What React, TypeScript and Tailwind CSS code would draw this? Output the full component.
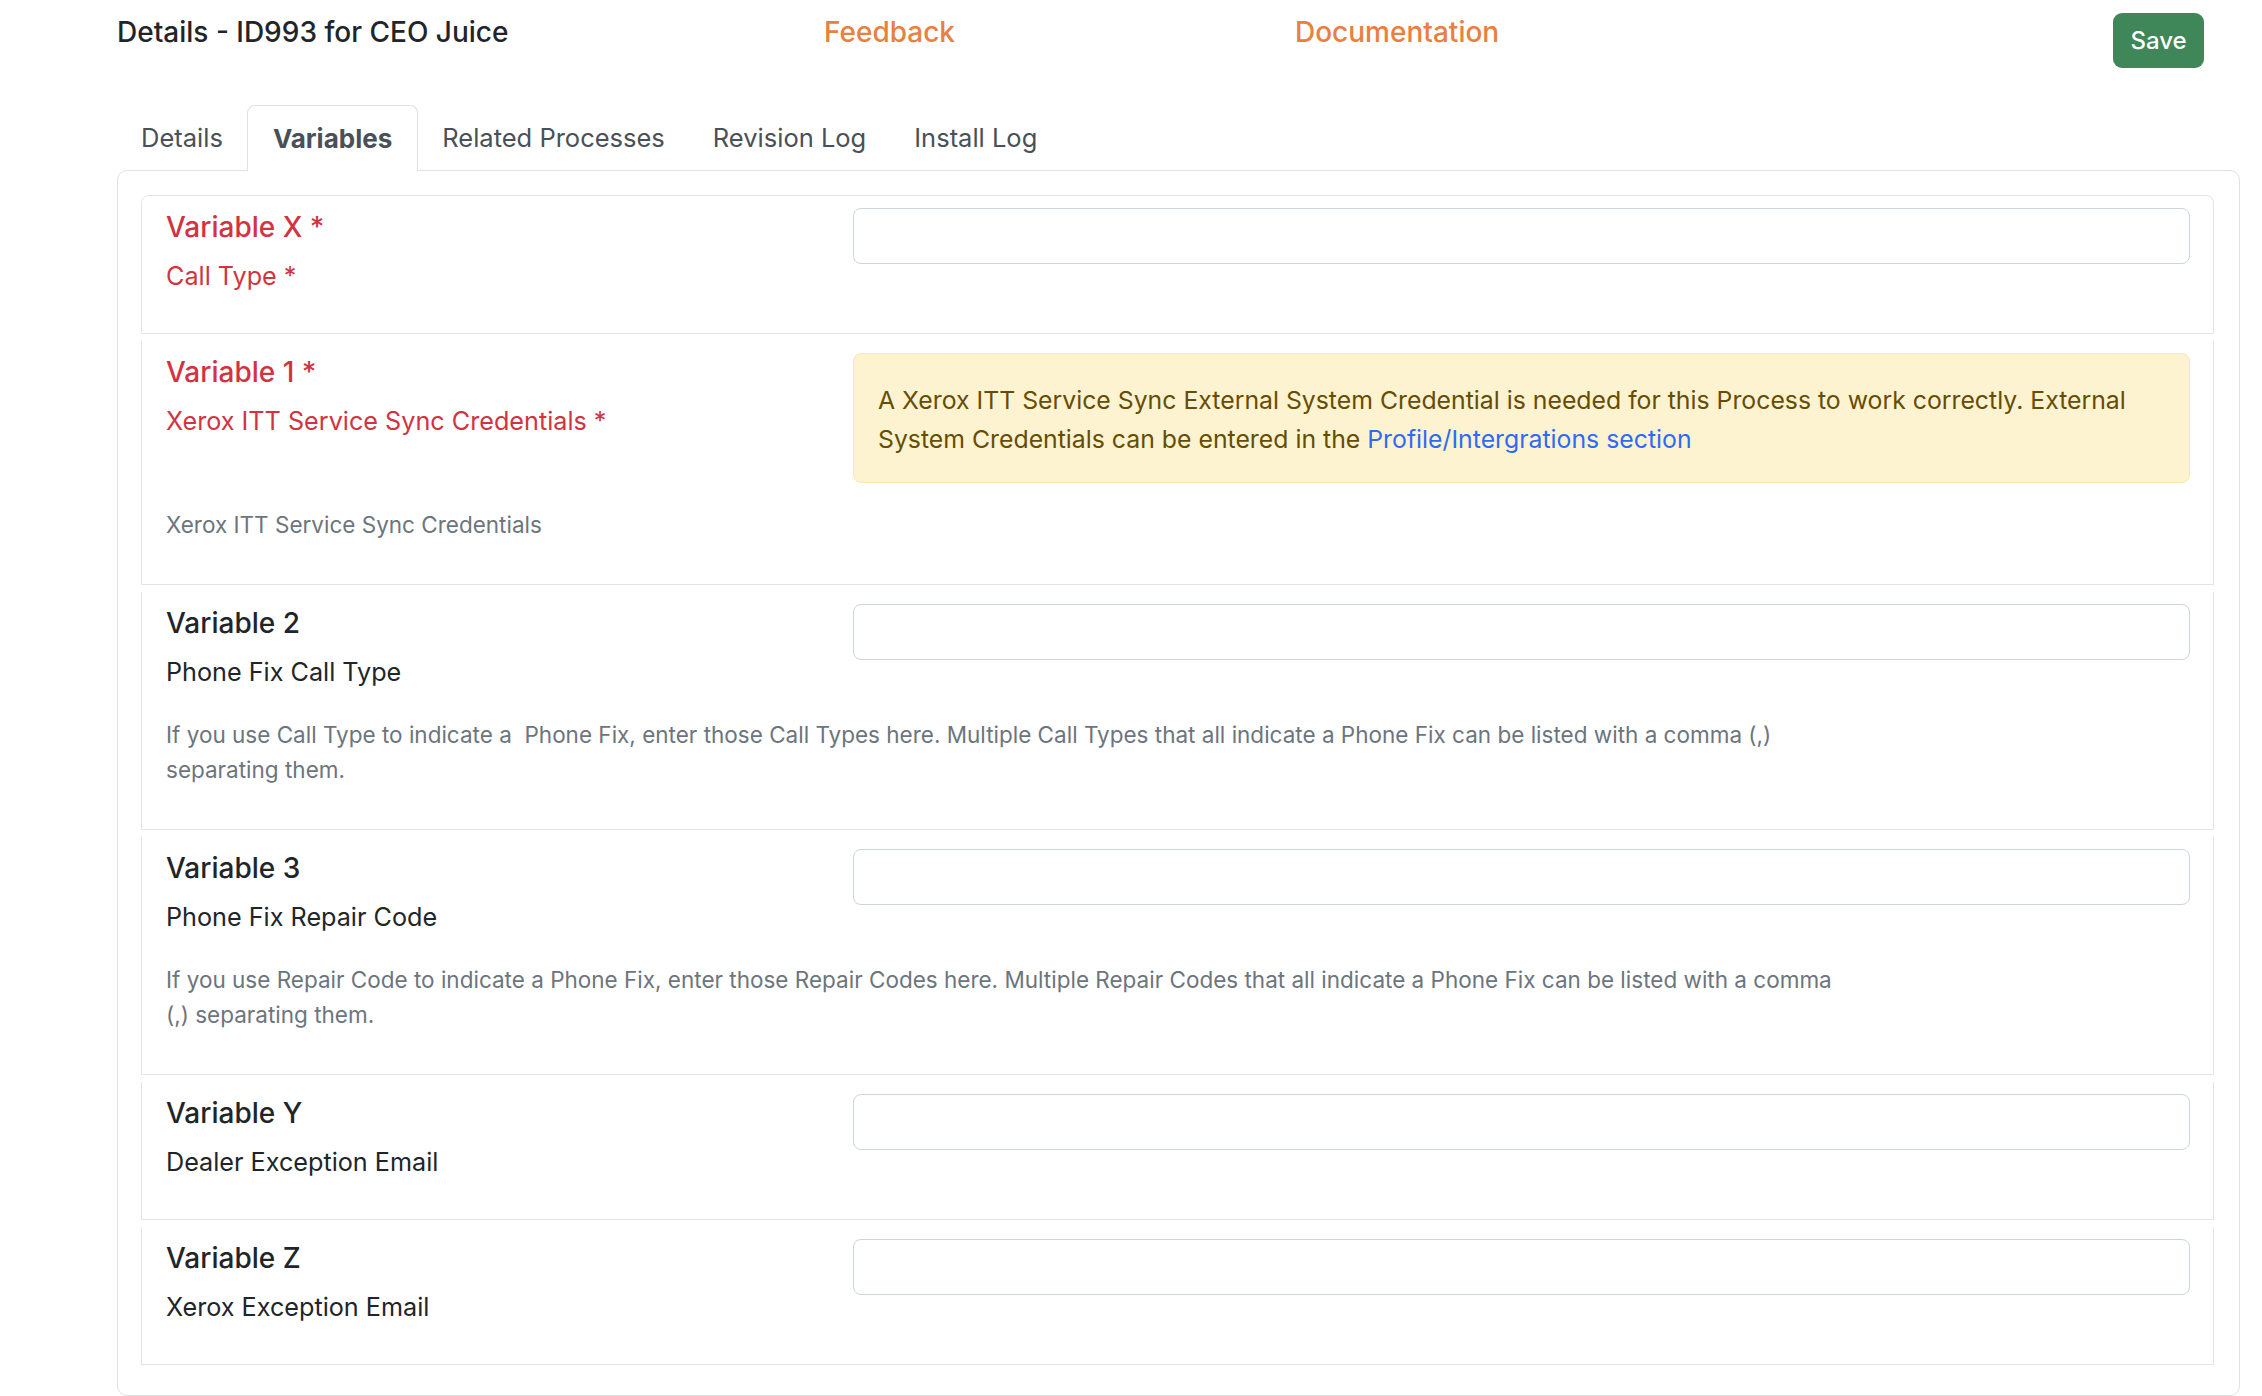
import { FunctionComponent } from "react";

type Row = {
  title: string;
  sub: string;
  required?: boolean;
  alert?: boolean;
  help?: string;
};

const rows: Row[] = [
  { title: "Variable X *", sub: "Call Type *", required: true },
  {
    title: "Variable 1 *",
    sub: "Xerox ITT Service Sync Credentials *",
    required: true,
    alert: true,
    help: "Xerox ITT Service Sync Credentials",
  },
  {
    title: "Variable 2",
    sub: "Phone Fix Call Type",
    help: "If you use Call Type to indicate a\u00a0 Phone Fix, enter those Call Types here. Multiple Call Types that all indicate a Phone Fix can be listed with a comma (,) separating them.",
  },
  {
    title: "Variable 3",
    sub: "Phone Fix Repair Code",
    help: "If you use Repair Code to indicate a Phone Fix, enter those Repair Codes here. Multiple Repair Codes that all indicate a Phone Fix can be listed with a comma (,) separating them.",
  },
  { title: "Variable Y", sub: "Dealer Exception Email" },
  { title: "Variable Z", sub: "Xerox Exception Email" },
];

const tabs = ["Details", "Variables", "Related Processes", "Revision Log", "Install Log"];

const VariableRow: FunctionComponent<{ row: Row; first: boolean }> = ({ row, first }) => {
  const labelColor = row.required ? "text-[#d1343f]" : "text-[#212529]";
  return (
    <div
      className={`border-x border-b border-[#e2e5e8] bg-white pl-[24px] pr-[23px] pt-[12px] pb-[12px] ${
        first ? "border-t rounded-t-[8px]" : "mt-[7px]"
      }`}
    >
      <div className="flex flex-row items-start">
        <div className="w-[687px] shrink-0 flex flex-col mb-[28px]">
          <div className={`text-[28px] leading-[38px] font-medium ${labelColor}`}>{row.title}</div>
          <div className={`mt-[13px] text-[25.2px] leading-[34px] ${labelColor}`}>{row.sub}</div>
        </div>
        <div className="flex-1">
          {row.alert ? (
            <div className="mb-[24px] rounded-[8px] border border-[#fbe9b1] bg-[#fdf3d1] px-[24px] pt-[27px] pb-[23px] text-[24.8px] leading-[39px] text-[#664d03]">
              A Xerox ITT Service Sync External System Credential is needed for this Process to work
              correctly. External System Credentials can be entered in the{" "}
              <a className="text-[#2e6bf5]" href="#">
                Profile/Intergrations section
              </a>
            </div>
          ) : (
            <div className="h-[56px] w-full rounded-[8px] border border-[#ced4da] bg-white" />
          )}
        </div>
      </div>
      {row.help && (
        <p className="max-w-[1690px] mb-[30px] text-[22.5px] leading-[35px] text-[#6c757d]">{row.help}</p>
      )}
    </div>
  );
};

const App: FunctionComponent = () => {
  return (
    <div className="min-h-screen bg-white pl-[117px] pr-[22px] font-['Inter',sans-serif]">
      <div className="h-[105px] flex flex-row items-start pt-[13px] pr-[36px]">
        <h1 className="w-[707px] mt-[2px] text-[28px] leading-[34px] font-medium text-[#212529]">
          Details - ID993 for CEO Juice
        </h1>
        <a href="#" className="w-[471px] mt-[2px] text-[28px] leading-[34px] font-medium text-[#e8803f]">
          Feedback
        </a>
        <a href="#" className="mt-[2px] text-[28px] leading-[34px] font-medium text-[#e8803f]">
          Documentation
        </a>
        <div className="flex-1" />
        <button className="h-[55px] w-[91px] rounded-[9px] bg-[#3f8658] text-[24px] font-medium text-white">
          Save
        </button>
      </div>
      <div className="flex flex-row h-[66px] -mb-px relative">
        {tabs.map((t) =>
          t === "Variables" ? (
            <div
              key={t}
              className="flex items-center px-[25px] text-[26px] font-bold text-[#495057] border border-b-0 border-[#dee2e6] rounded-t-[8px] bg-white"
            >
              {t}
            </div>
          ) : (
            <div key={t} className="flex items-center px-[23px] text-[25.5px] text-[#495057] border border-transparent">
              {t}
            </div>
          )
        )}
      </div>
      <div className="rounded-[10px] border border-[#dee2e6] pl-[23px] pr-[25px] pt-[24px] pb-[30px]">
        {rows.map((r, i) => (
          <VariableRow key={r.title} row={r} first={i === 0} />
        ))}
      </div>
    </div>
  );
};

export default App;
